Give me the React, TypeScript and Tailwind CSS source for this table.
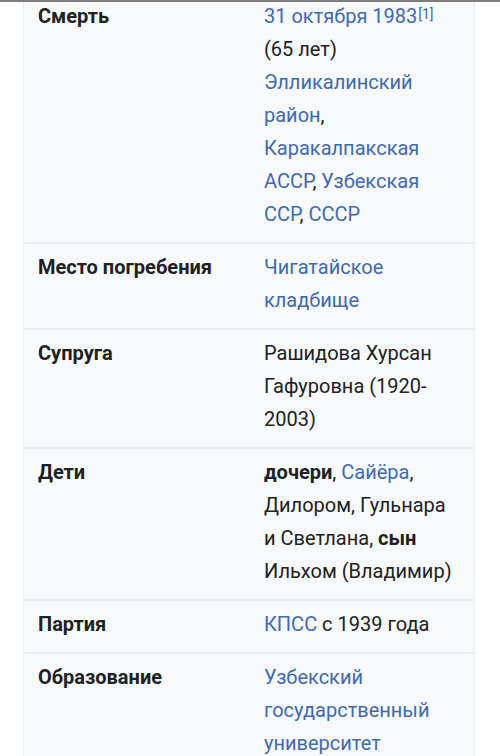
import React from "react";

type Part = { t: string; link?: boolean; bold?: boolean; sup?: string };

const rows: { label: string; lines: Part[][] }[] = [
  {
    label: "Смерть",
    lines: [
      [{ t: "31 октября 1983", link: true, sup: "[1]" }],
      [{ t: "(65 лет)" }],
      [{ t: "Элликалинский", link: true }],
      [{ t: "район", link: true }, { t: "," }],
      [{ t: "Каракалпакская", link: true }],
      [{ t: "АССР", link: true }, { t: ", " }, { t: "Узбекская", link: true }],
      [{ t: "ССР", link: true }, { t: ", " }, { t: "СССР", link: true }],
    ],
  },
  {
    label: "Место погребения",
    lines: [[{ t: "Чигатайское", link: true }], [{ t: "кладбище", link: true }]],
  },
  {
    label: "Супруга",
    lines: [[{ t: "Рашидова Хурсан" }], [{ t: "Гафуровна (1920-" }], [{ t: "2003)" }]],
  },
  {
    label: "Дети",
    lines: [
      [{ t: "дочери", bold: true }, { t: ", " }, { t: "Сайёра", link: true }, { t: "," }],
      [{ t: "Дилором, Гульнара" }],
      [{ t: "и Светлана, " }, { t: "сын", bold: true }],
      [{ t: "Ильхом (Владимир)" }],
    ],
  },
  {
    label: "Партия",
    lines: [[{ t: "КПСС", link: true }, { t: " с 1939 года" }]],
  },
  {
    label: "Образование",
    lines: [
      [{ t: "Узбекский", link: true }],
      [{ t: "государственный", link: true }],
      [{ t: "университет", link: true }],
    ],
  },
];

export default function App() {
  return (
    <div
      className="relative w-[500px] h-[756px] overflow-hidden bg-white text-[#202122]"
      style={{ fontFamily: "Roboto, 'Liberation Sans', sans-serif" }}
    >
      <div className="absolute top-0 left-0 w-full h-[2px] bg-[#7d7d7d]" />
      <div className="ml-[23px] w-[452px] bg-[#f8f9fa] border-l border-r border-[#eef0f2] mt-[-7px]">
        {rows.map((row, i) => (
          <div
            key={row.label}
            className={`grid grid-cols-[226px_1fr] pl-[14px] pt-[7px] pb-[11px] text-[20px] leading-[33px] ${
              i > 0 ? "border-t-2 border-[#eaecf0]" : ""
            }`}
          >
            <div className="font-bold">{row.label}</div>
            <div>
              {row.lines.map((line, j) => (
                <div key={j} className="whitespace-nowrap">
                  {line.map((p, k) => (
                    <span
                      key={k}
                      className={`${p.link ? "text-[#3f69b0]" : ""} ${p.bold ? "font-bold" : ""}`}
                    >
                      {p.t}
                      {p.sup && (
                        <sup className="text-[14px] relative top-[-4px] ml-[1px]">{p.sup}</sup>
                      )}
                    </span>
                  ))}
                </div>
              ))}
            </div>
          </div>
        ))}
      </div>
    </div>
  );
}
